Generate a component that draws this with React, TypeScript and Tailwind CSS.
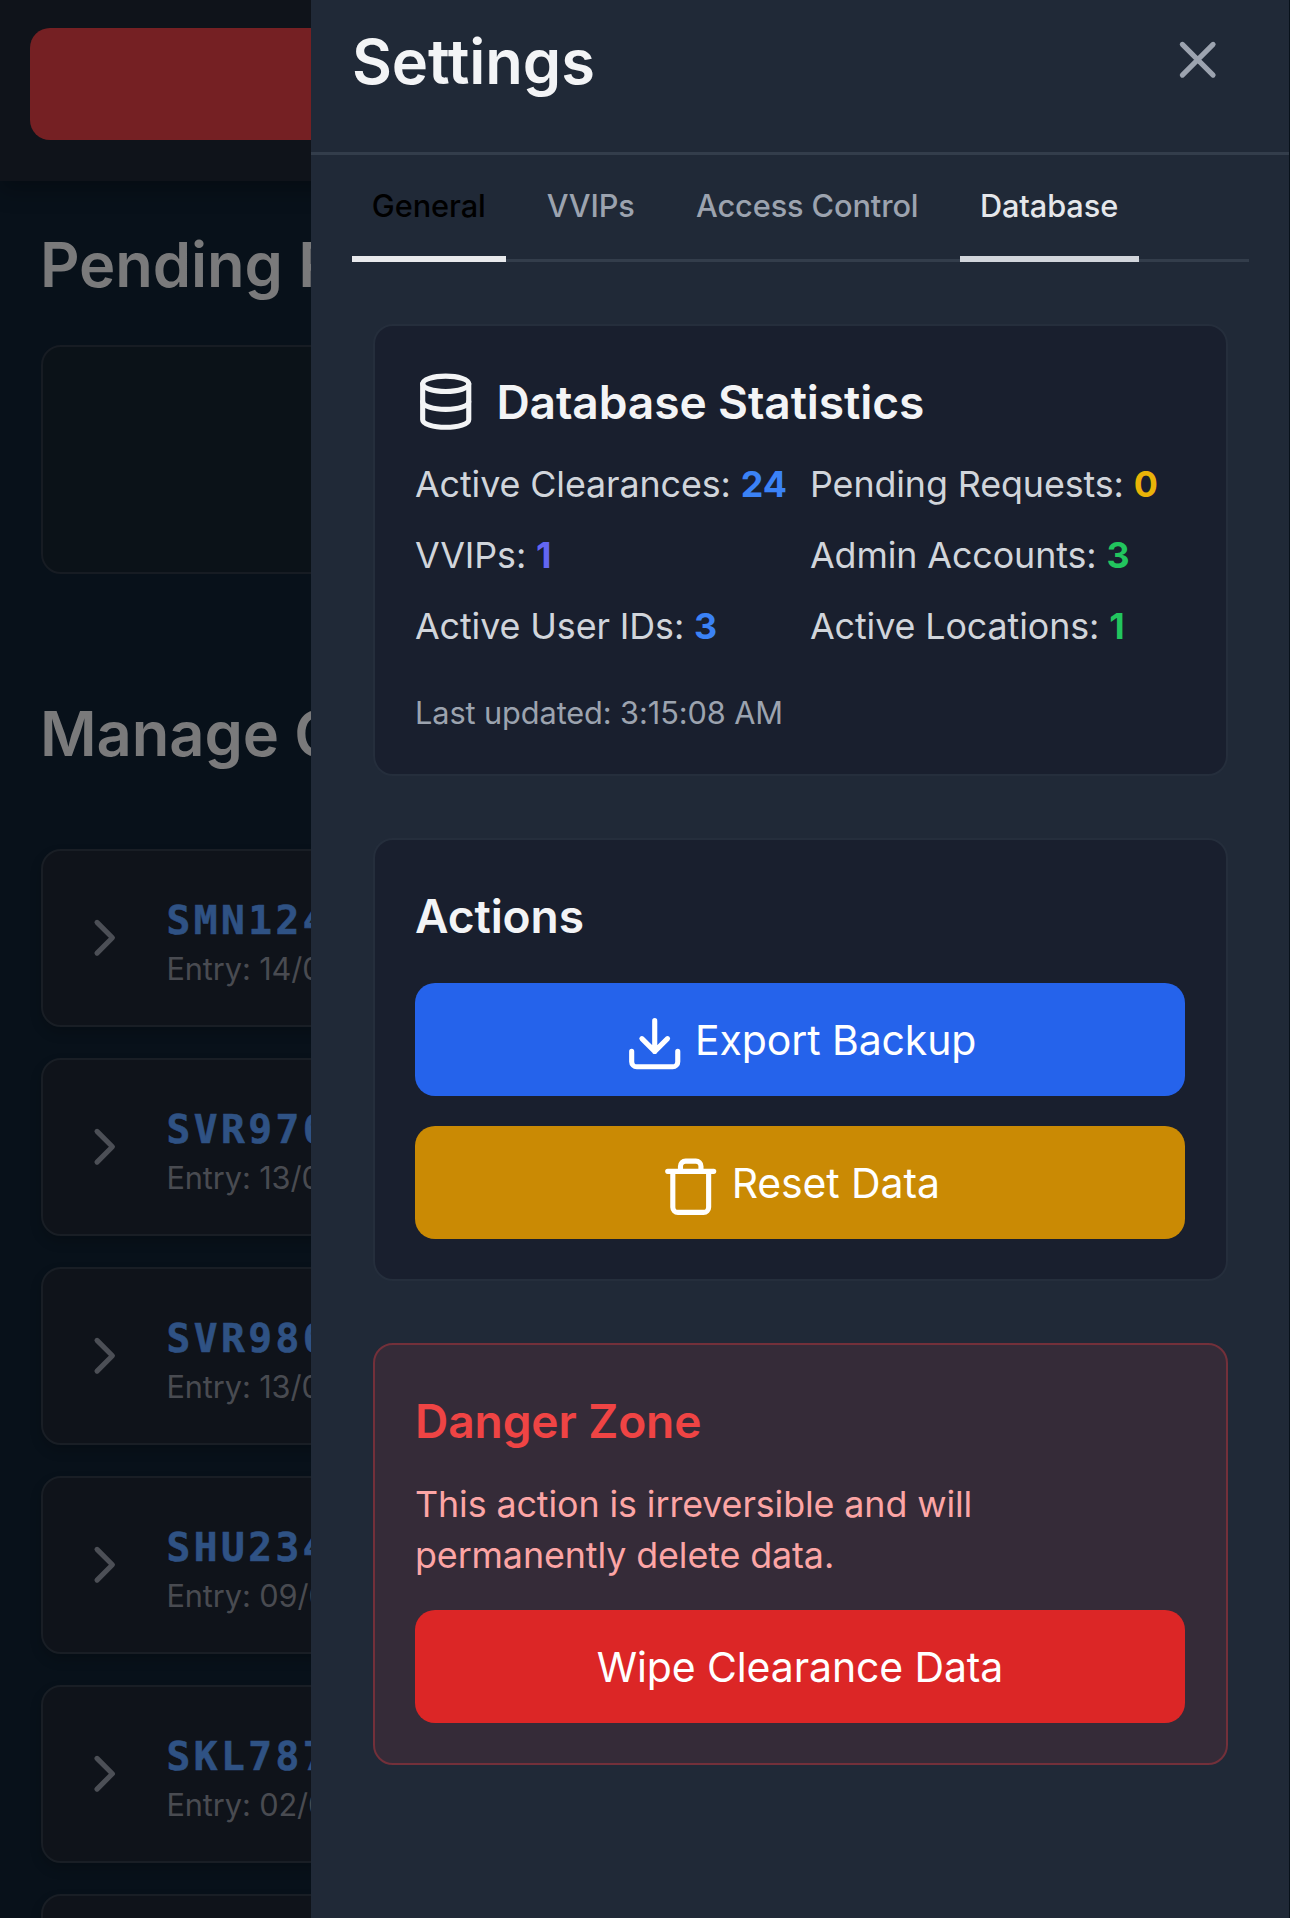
import type { ReactNode } from "react";

const rows = [
  { code: "SMN124", entry: "Entry: 14/05" },
  { code: "SVR976", entry: "Entry: 13/05" },
  { code: "SVR986", entry: "Entry: 13/05" },
  { code: "SHU234", entry: "Entry: 09/05" },
  { code: "SKL787", entry: "Entry: 02/05" },
  { code: "SKL780", entry: "Entry: 02/05" },
];

const stats = [
  { label: "Active Clearances:", value: "24", color: "text-[#3b82f6]" },
  { label: "Pending Requests:", value: "0", color: "text-[#eab308]" },
  { label: "VVIPs:", value: "1", color: "text-[#6366f1]" },
  { label: "Admin Accounts:", value: "3", color: "text-[#22c55e]" },
  { label: "Active User IDs:", value: "3", color: "text-[#3b82f6]" },
  { label: "Active Locations:", value: "1", color: "text-[#22c55e]" },
];

function Icon({ className, children }: { className: string; children: ReactNode }) {
  return (
    <svg
      viewBox="0 0 24 24"
      fill="none"
      stroke="currentColor"
      strokeWidth="2"
      strokeLinecap="round"
      strokeLinejoin="round"
      className={className}
    >
      {children}
    </svg>
  );
}

function Background() {
  return (
    <div className="h-[1918px] w-[1290px] shrink-0 overflow-hidden bg-[#08111a]">
      <div className="h-[181px] bg-[#0f131a] px-[30px] pt-7 shadow-[0_10px_20px_rgba(0,0,0,0.25)]">
        <div className="h-28 rounded-[20px] bg-[#752023]" />
      </div>
      <div className="px-[41px]">
        <h2 className="-ml-px mt-[43px] h-[82px] whitespace-nowrap text-[61.44px] font-semibold leading-[82px] text-[#7a7a7b]">
          Pending Requests
        </h2>
        <div className="mt-[39px] h-[229px] rounded-[20px] border-2 border-[#171c23] bg-[#0b1218]" />
        <h2 className="-ml-px mt-[119px] h-[82px] whitespace-nowrap text-[61.44px] font-semibold leading-[82px] text-[#7a7a7b]">
          Manage Clearances
        </h2>
        <div className="mt-[74px] flex flex-col gap-[31px]">
          {rows.map((r) => (
            <div
              key={r.code}
              className="flex h-[178px] shrink-0 items-center gap-[31px] rounded-[20px] border-2 border-[#191e25] bg-[#0f131a] px-[31px] shadow-[0_6px_12px_rgba(0,0,0,0.18)]"
            >
              <Icon className="size-[61.44px] shrink-0 text-[#4c4f56]">
                <path d="m9 18 6-6-6-6" />
              </Icon>
              <div className="whitespace-nowrap pt-1">
                <div className="font-['DejaVu_Sans_Mono',monospace] text-[39.5px] font-bold leading-[56px] tracking-[3.5px] text-[#2f5284] [-webkit-text-stroke:0.6px_#2f5284]">
                  {r.code}
                </div>
                <div className="text-[30.72px] leading-[41px] text-[#494b51]">{r.entry}</div>
              </div>
            </div>
          ))}
        </div>
      </div>
    </div>
  );
}

export default function App() {
  return (
    <div className="flex h-[1918px] w-[1290px] overflow-hidden bg-[#08111a] font-['Inter',sans-serif] tracking-[-0.1px]">
      <div className="w-[311px] shrink-0 overflow-hidden">
        <Background />
      </div>
      <aside className="mr-px flex w-[978px] shrink-0 flex-col bg-[#202937]">
        <header className="flex h-[155px] shrink-0 items-start justify-between border-b-[3px] border-[#333d4b] pl-[41px] pr-[61px]">
          <h1 className="mt-[21px] text-[61.44px] font-semibold leading-[82px] text-[#f3f4f6]">Settings</h1>
          <Icon className="mt-[29px] size-[61.44px] text-[#9ca3af]">
            <path d="M18 6 6 18M6 6l12 12" />
          </Icon>
        </header>
        <nav className="mx-[40.5px] flex h-[107px] shrink-0 gap-[20.5px] border-b-[3px] border-[#333d4b] text-center text-[30.72px] font-medium leading-[41px]">
          <div className="h-[107px] w-[154.5px] shrink-0 border-b-[6px] border-[#e8e9ec] pt-[30px] text-black">General</div>
          <div className="h-[107px] w-[128.5px] shrink-0 pt-[30px] text-[#9ca3af]">VVIPs</div>
          <div className="h-[107px] w-[263.5px] shrink-0 pt-[30px] text-[#9ca3af]">Access Control</div>
          <div className="h-[107px] w-[179px] shrink-0 border-b-[6px] border-[#d1d5db] pt-[30px] text-[#e5e7eb]">Database</div>
        </nav>
        <main className="flex flex-col gap-[62px] px-[61.5px] pt-[62px]">
          <section className="h-[452px] rounded-[20px] border-2 border-[#252e3c] bg-[#191f2e] px-[40.5px] pt-[39.5px]">
            <h2 className="flex items-center gap-[20px] text-[46.08px] font-semibold leading-[72px] text-[#f3f4f6]">
              <Icon className="size-[61.44px]">
                <ellipse cx="12" cy="5" rx="9" ry="3" />
                <path d="M3 5v14a9 3 0 0 0 18 0V5" />
                <path d="M3 12a9 3 0 0 0 18 0" />
              </Icon>
              Database Statistics
            </h2>
            <div className="mt-[21.5px] grid grid-cols-[374px_1fr] gap-x-[21px] gap-y-[20px] whitespace-nowrap text-[35.84px] leading-[51px] text-[#d1d5db]">
              {stats.map((s) => (
                <div key={s.label}>
                  {s.label} <span className={`font-bold ${s.color}`}>{s.value}</span>
                </div>
              ))}
            </div>
            <p className="mt-[40px] text-[30.72px] leading-[41px] text-[#9ca3af]">Last updated: 3:15:08 AM</p>
          </section>
          <section className="h-[443px] rounded-[20px] border-2 border-[#252e3c] bg-[#191f2e] px-[40.5px] pt-[40px]">
            <h2 className="text-[46.08px] font-semibold leading-[72px] text-[#f3f4f6]">Actions</h2>
            <button className="mt-[31px] flex h-[112.6px] w-full items-center justify-center gap-[10px] rounded-[20px] bg-[#2563eb] pt-0.5 text-[40.96px] text-white">
              <Icon className="mt-1.5 size-[61.44px]">
                <path d="M21 15v4a2 2 0 0 1-2 2H5a2 2 0 0 1-2-2v-4M7 10l5 5 5-5M12 15V3" />
              </Icon>
              Export Backup
            </button>
            <button className="mt-[30.4px] flex h-[112.6px] w-full items-center justify-center gap-[10px] rounded-[20px] bg-[#ca8a04] pt-0.5 text-[40.96px] text-white">
              <Icon className="mt-1.5 size-[61.44px]">
                <path d="M3 6h18M19 6v14a2 2 0 0 1-2 2H7a2 2 0 0 1-2-2V6M8 6V4a2 2 0 0 1 2-2h4a2 2 0 0 1 2 2v2" />
              </Icon>
              Reset Data
            </button>
          </section>
          <section className="h-[422px] rounded-[20px] border-2 border-[#73303a] bg-[#352b38] px-[40.5px] pt-[40px]">
            <h2 className="text-[46.08px] font-semibold leading-[72px] text-[#ef4444]">Danger Zone</h2>
            <p className="mt-[22px] text-[35.84px] leading-[51px] text-[#fca5a5]">
              This action is irreversible and will
              <br />
              permanently delete data.
            </p>
            <button className="mt-[29px] flex h-[112.6px] w-full items-center justify-center rounded-[20px] bg-[#dc2626] pt-0.5 text-[40.96px] text-white">
              Wipe Clearance Data
            </button>
          </section>
        </main>
      </aside>
    </div>
  );
}
